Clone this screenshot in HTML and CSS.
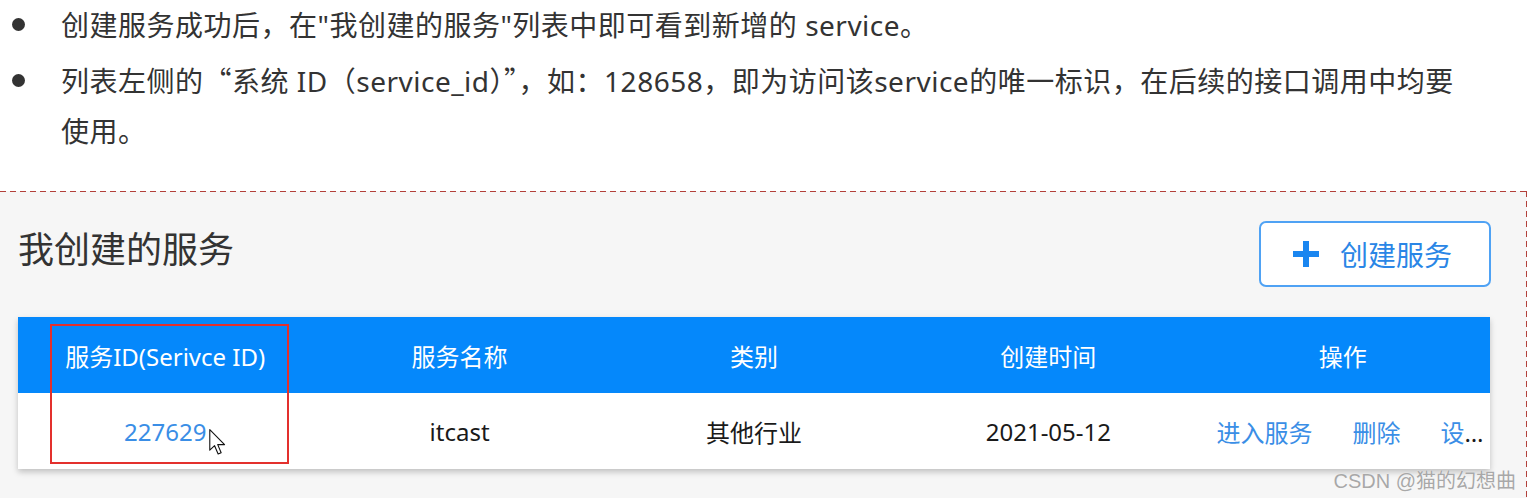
FILE: index.html
```html
<!DOCTYPE html>
<html lang="zh-CN">
<head>
<meta charset="utf-8">
<title>我创建的服务</title>
<link rel="stylesheet" href="styles.css">
</head>
<body>
<ul class="notes">
  <li class="note"><span class="note-text">创建服务成功后，在"我创建的服务"列表中即可看到新增的 service。</span></li>
  <li class="note"><span class="note-text">列表左侧的<span class="cjk-q">“</span>系统 ID（service_id）<span class="cjk-q">”</span>，如：128658，即为访问该service的唯一标识，在后续的接口调用中均要使用。</span></li>
</ul>
<section class="panel">
  <div class="panel-head">
    <h2 class="panel-title">我创建的服务</h2>
    <button class="btn-create" type="button">
      <svg class="btn-plus" viewBox="0 0 26 26" width="26" height="26" aria-hidden="true"><path d="M10 0h6v10h10v6H16v10h-6V16H0v-6h10z" fill="#1a86f0"/></svg>
      <span>创建服务</span>
    </button>
  </div>
  <div class="table-wrap">
    <table class="svc-table">
      <thead>
        <tr><th>服务ID(Serivce ID)</th><th>服务名称</th><th>类别</th><th>创建时间</th><th>操作</th></tr>
      </thead>
      <tbody>
        <tr>
          <td><a class="link" href="#">227629</a></td>
          <td>itcast</td>
          <td>其他行业</td>
          <td>2021-05-12</td>
          <td class="ops"><a class="link" href="#">进入服务</a><a class="link op" href="#">删除</a><a class="link op" href="#">设置</a></td>
        </tr>
      </tbody>
    </table>
    <div class="highlight"></div>
    <svg class="cursor" viewBox="0 0 13 19" width="18" height="26" aria-hidden="true"><path d="M0.5 0.5V15.5L4 12.2L6.6 18.3L8.8 17.3L6.3 11.4H11.3Z" fill="#fff" stroke="#111" stroke-width="0.8" stroke-linejoin="round"/></svg>
  </div>
  <div class="watermark">CSDN @猫的幻想曲</div>
</section>
</body>
</html>
```

FILE: styles.css
```css
* { box-sizing: border-box; }
html, body { margin: 0; padding: 0; }
body {
  background: #fff;
  width: 1532px;
  height: 498px;
  overflow: hidden;
  font-family: "Noto Sans", "Noto Sans CJK SC", sans-serif;
  color: #333;
}
.notes {
  list-style: none;
  margin: 0;
  padding: 0;
  width: 1476px;
}
.note {
  display: flex;
  align-items: flex-start;
  font-size: 28px;
  line-height: 50px;
  letter-spacing: 0.5px;
  margin-bottom: 6px;
}
.note::before {
  content: "";
  flex: none;
  width: 13px;
  height: 13px;
  border-radius: 50%;
  background: #333;
  margin: 18px 36px 0 12px;
}
.note-text { flex: 1; }
.cjk-q { font-family: "Noto Sans CJK SC", sans-serif; line-height: 1; }
.panel {
  position: relative;
  margin-top: 35px;
  width: 1527px;
  height: 310px;
  background-color: #f6f6f6;
  background-image:
    repeating-linear-gradient(90deg, #b2403a 0 6px, transparent 6px 10px),
    repeating-linear-gradient(180deg, #b2403a 0 6px, transparent 6px 10px);
  background-size: 100% 1px, 1px 100%;
  background-position: 0 0, 100% 0;
  background-repeat: no-repeat;
  padding: 30px 36px 0 18px;
}
.panel-head {
  display: flex;
  justify-content: space-between;
  align-items: center;
  height: 66px;
}
.panel-title {
  margin: -8px 0 0;
  font-size: 36px;
  font-weight: 400;
  color: #333;
  line-height: 1;
}
.btn-create {
  display: flex;
  align-items: center;
  gap: 21px;
  width: 232px;
  height: 66px;
  padding: 0 0 0 32px;
  background: #fff;
  border: 2px solid #4fa2f4;
  border-radius: 7px;
  font-family: inherit;
  font-size: 28px;
  color: #2a86e6;
}
.btn-plus { flex: none; }
.table-wrap {
  position: relative;
  margin-top: 30px;
  width: 1472px;
}
.svc-table {
  width: 1472px;
  border-collapse: collapse;
  table-layout: fixed;
  background: #fff;
  box-shadow: 0 3px 6px rgba(0,0,0,0.22);
  font-size: 24px;
}
.svc-table th {
  height: 76px;
  background: #0588fb;
  color: #fff;
  font-weight: 400;
  text-align: center;
  padding: 0;
}
.svc-table td {
  height: 76px;
  text-align: center;
  color: #1a1a1a;
  padding: 0;
}
.svc-table td.ops {
  text-align: left;
  padding: 0 6px 0 21px;
  white-space: nowrap;
  overflow: hidden;
  text-overflow: ellipsis;
}
.link {
  color: #3a8ee6;
  text-decoration: none;
}
.op { margin-left: 40px; }
.highlight {
  position: absolute;
  left: 32px;
  top: 7px;
  width: 239px;
  height: 140px;
  border: 2px solid #e3302d;
}
.cursor {
  position: absolute;
  left: 191px;
  top: 112px;
}
.watermark {
  position: absolute;
  right: 11px;
  bottom: 10px;
  font-family: "Liberation Sans", "Noto Sans CJK SC", sans-serif;
  font-size: 20px;
  line-height: 20px;
  color: #a8a8a8;
  text-shadow: 0 0 1px #fff;
}
```
